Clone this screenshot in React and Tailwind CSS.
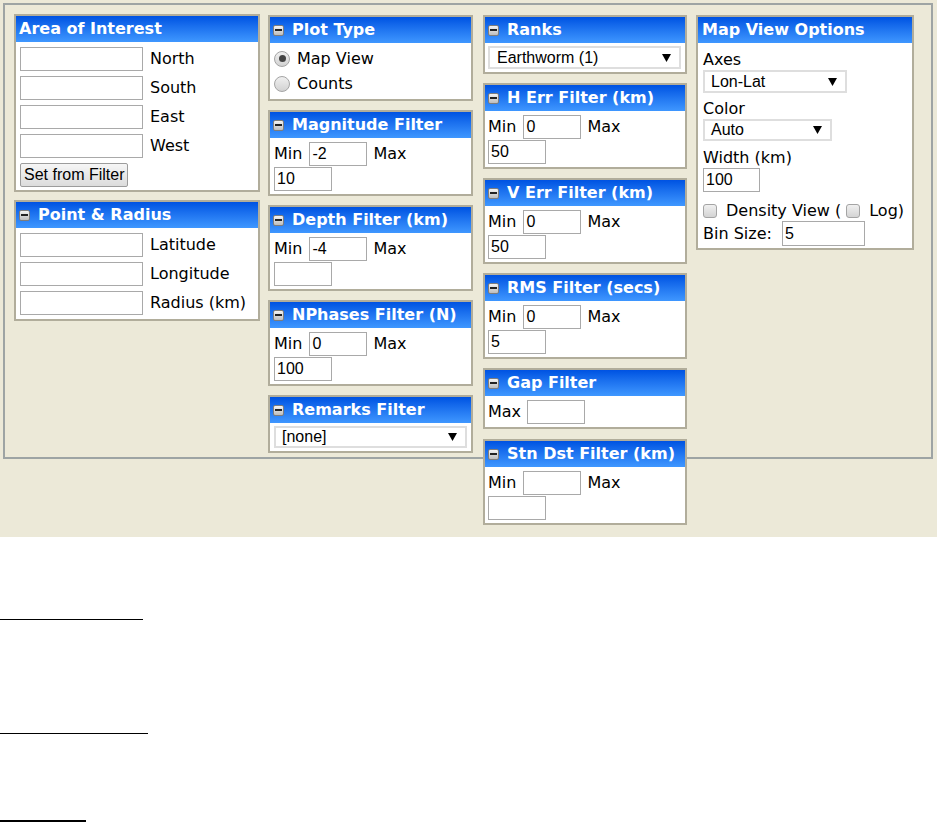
import React from 'react';

function Minus() {
  return (
    <span className="w-[11px] h-[11px] rounded-[2px] border border-[#7d7d7d] bg-linear-to-b from-[#f4f4f4] to-[#bdbdbd] flex items-center justify-center mr-[8px] shrink-0">
      <span className="w-[7px] h-[2px] bg-[#222]" />
    </span>
  );
}

function Header({ title, icon = true, pl = 'pl-[3px]' }) {
  return (
    <div className={`h-[26px] flex items-center ${pl} bg-linear-to-b from-[#0052e2] to-[#3f97ff] text-white font-bold text-[16px] whitespace-nowrap`}>
      {icon && <Minus />}
      <span>{title}</span>
    </div>
  );
}

function Panel({ title, icon = true, children, className = '', hpl }) {
  return (
    <div className={`border-2 border-[#b1ad9b] bg-white ${className}`}>
      <Header title={title} icon={icon} pl={hpl} />
      {children}
    </div>
  );
}

function Field({ value = '', className = '' }) {
  return (
    <input
      readOnly
      value={value}
      className={`h-[24px] border border-[#a9a9a9] bg-white px-[2px] text-[16px] font-['Liberation_Sans',Arial,sans-serif] text-black outline-none ${className}`}
    />
  );
}

function Select({ value, className = '' }) {
  return (
    <div className={`border-2 border-[#dedede] bg-white flex items-center justify-between pl-[6px] pr-[8px] text-[16px] font-['Liberation_Sans',Arial,sans-serif] ${className}`}>
      <span>{value}</span>
      <svg width="9" height="8" viewBox="0 0 9 8"><polygon points="0,0 9,0 4.5,8" fill="#000" /></svg>
    </div>
  );
}

function Radio({ checked }) {
  return (
    <span className="w-[16px] h-[16px] rounded-full border border-[#a4a4a4] bg-linear-to-b from-[#f0f0f0] to-[#d2d2d2] flex items-center justify-center shrink-0">
      {checked && <span className="w-[7px] h-[7px] rounded-full bg-[#444]" />}
    </span>
  );
}

function Check() {
  return <span className="w-[14px] h-[14px] rounded-[3px] border border-[#a4a4a4] bg-linear-to-b from-[#f0f0f0] to-[#d4d4d4] shrink-0" />;
}

function Filter({ title, min = '', max = '', pl = 'pl-[4px]' }) {
  return (
    <Panel title={title} className="mb-[9px]">
      <div className={`pt-[4px] pb-[3px] ${pl}`}>
        <div className="flex items-center">
          <span>Min</span>
          <Field value={min} className="w-[58px] ml-[7px]" />
          <span className="ml-[6px]">Max</span>
        </div>
        <Field value={max} className="w-[58px] mt-[1px] block" />
      </div>
    </Panel>
  );
}

function Row({ label, last }) {
  return (
    <div className={`flex items-center ${last ? '' : 'mb-[5px]'}`}>
      <Field className="w-[123px]" />
      <span className="ml-[7px]">{label}</span>
    </div>
  );
}

export default function App() {
  return (
    <div className="min-h-screen bg-white text-black text-[16px] font-['DejaVu_Sans',Verdana,sans-serif]">
      <div className="bg-[#ece9d8] h-[537px] pt-[3px] pl-[3px]">
        <div className="w-[930px] h-[456px] border-2 border-[#9ea4a4] flex items-start pt-[9px] pl-[9px]">
          {/* column 1 */}
          <div className="w-[246px]">
            <Panel title="Area of Interest" icon={false} className="mb-[8px]">
              <div className="pt-[5px] pb-[3px] pl-[4px]">
                <Row label="North" />
                <Row label="South" />
                <Row label="East" />
                <Row label="West" />
                <button className="h-[24px] px-[3px] border border-[#9c9c9c] rounded-[2px] bg-linear-to-b from-[#f6f6f6] to-[#dcdcdc] text-[16px] font-['Liberation_Sans',Arial,sans-serif] leading-none">
                  Set from Filter
                </button>
              </div>
            </Panel>
            <Panel title="Point & Radius">
              <div className="pt-[5px] pb-[4px] pl-[4px]">
                <Row label="Latitude" />
                <Row label="Longitude" />
                <Row label="Radius (km)" last />
              </div>
            </Panel>
          </div>

          {/* column 2 */}
          <div className="w-[205px] ml-[8px] mt-[1px]">
            <Panel title="Plot Type" className="mb-[9px]">
              <div className="pt-[3px] pb-[3px] pl-[4px]">
                <div className="h-[25px] flex items-center">
                  <Radio checked />
                  <span className="ml-[7px]">Map View</span>
                </div>
                <div className="h-[25px] flex items-center">
                  <Radio />
                  <span className="ml-[7px]">Counts</span>
                </div>
              </div>
            </Panel>
            <Filter title="Magnitude Filter" min="-2" max="10" />
            <Filter title="Depth Filter (km)" min="-4" max="" />
            <Filter title="NPhases Filter (N)" min="0" max="100" />
            <Panel title="Remarks Filter">
              <div className="py-[3px] pl-[4px]">
                <Select value="[none]" className="w-[193px] h-[22px]" />
              </div>
            </Panel>
          </div>

          {/* column 3 */}
          <div className="w-[204px] ml-[10px] mt-[1px]">
            <Panel title="Ranks" className="mb-[9px]">
              <div className="py-[3px] pl-[3px]">
                <Select value="Earthworm (1)" className="w-[193px] h-[23px] pl-[7px]" />
              </div>
            </Panel>
            <Filter title="H Err Filter (km)" min="0" max="50" pl="pl-[3px]" />
            <Filter title="V Err Filter (km)" min="0" max="50" pl="pl-[3px]" />
            <Filter title="RMS Filter (secs)" min="0" max="5" pl="pl-[3px]" />
            <Panel title="Gap Filter" className="mb-[10px]">
              <div className="pt-[4px] pb-[3px] pl-[3px] flex items-center">
                <span>Max</span>
                <Field className="w-[58px] ml-[6px]" />
              </div>
            </Panel>
            <Filter title="Stn Dst Filter (km)" pl="pl-[3px]" />
          </div>

          {/* column 4 */}
          <div className="w-[218px] ml-[9px] mt-[1px]">
            <Panel title="Map View Options" icon={false} hpl="pl-[4px]">
              <div className="pt-[7px] pb-[2px] pl-[5px]">
                <div className="leading-[20px]">Axes</div>
                <Select value="Lon-Lat" className="w-[144px] h-[23px]" />
                <div className="leading-[20px] mt-[6px]">Color</div>
                <Select value="Auto" className="w-[129px] h-[22px]" />
                <div className="leading-[20px] mt-[7px]">Width (km)</div>
                <Field value="100" className="w-[57px] block" />
                <div className="flex items-center h-[21px] mt-[8px]">
                  <Check />
                  <span className="ml-[9px]">Density View (</span>
                  <span className="ml-[5px] flex items-center">
                    <Check />
                  </span>
                  <span className="ml-[9px]">Log)</span>
                </div>
                <div className="flex items-center">
                  <span>Bin Size:</span>
                  <Field value="5" className="w-[83px] h-[25px] ml-[10px]" />
                </div>
              </div>
            </Panel>
          </div>
        </div>
      </div>

      <div className="w-[143px] h-px bg-black mt-[82px]" />
      <div className="w-[148px] h-px bg-black mt-[113px]" />
      <div className="w-[86px] h-[2px] bg-black mt-[86px]" />
    </div>
  );
}
